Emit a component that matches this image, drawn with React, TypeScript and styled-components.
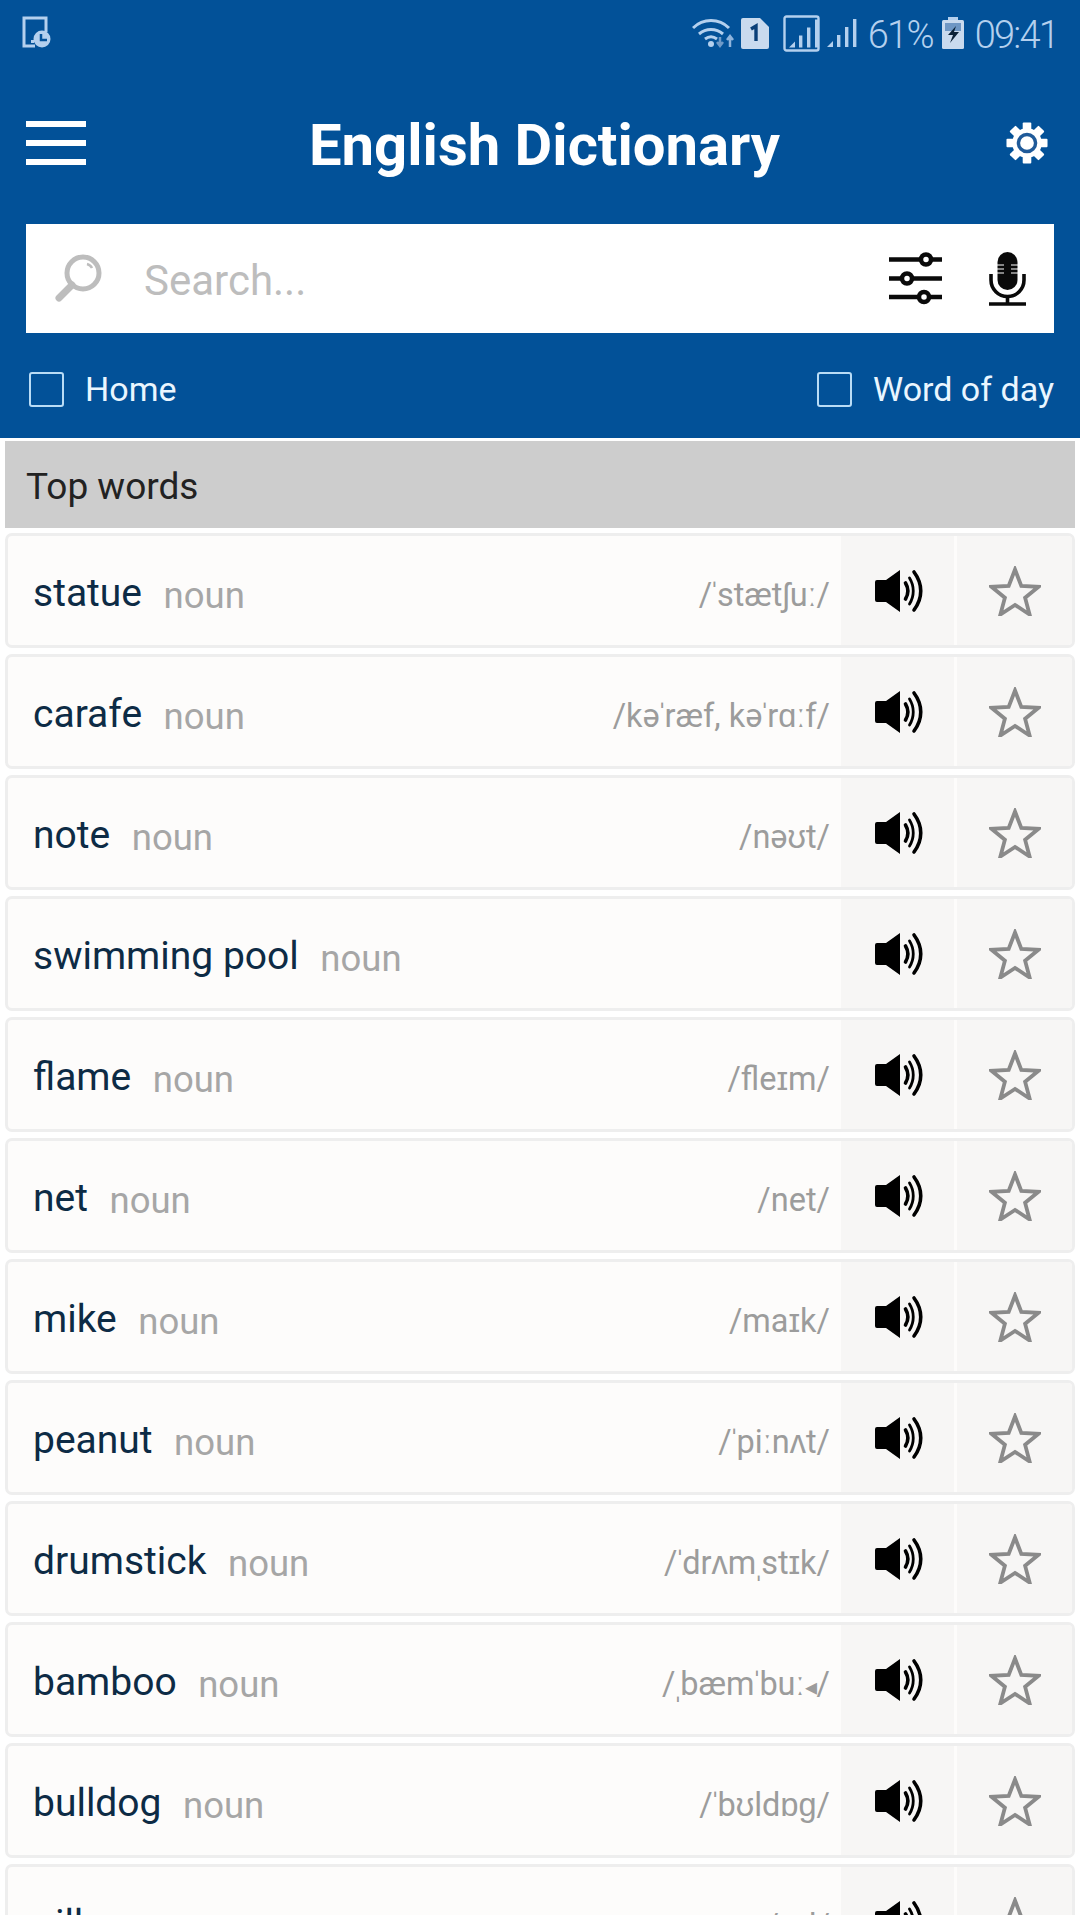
import React from 'react';
import styled, { createGlobalStyle } from 'styled-components';

const WORDS = [
  { word: 'statue', ipa: '/ˈstætʃuː/' },
  { word: 'carafe', ipa: '/kəˈræf, kəˈrɑːf/' },
  { word: 'note', ipa: '/nəʊt/' },
  { word: 'swimming pool', ipa: '' },
  { word: 'flame', ipa: '/fleɪm/' },
  { word: 'net', ipa: '/net/' },
  { word: 'mike', ipa: '/maɪk/' },
  { word: 'peanut', ipa: '/ˈpiːnʌt/' },
  { word: 'drumstick', ipa: '/ˈdrʌmˌstɪk/' },
  { word: 'bamboo', ipa: '/ˌbæmˈbuː◂/' },
  { word: 'bulldog', ipa: '/ˈbʊldɒɡ/' },
  { word: 'pill', ipa: '/pɪl/' },
];

const STATUS = '#b4d0ee';

const GEAR_TEETH = [0, 45, 90, 135, 180, 225, 270, 315];

const FileClockIcon = () => (
  <svg width="30" height="32" viewBox="0 0 30 32">
    <path d="M13 30H2V2h22v14" fill="none" stroke={STATUS} strokeWidth="3" />
    <circle cx="20" cy="23" r="8.500" fill={STATUS} />
    <path d="M19 18v6h6" fill="none" stroke="#03529b" strokeWidth="2.500" />
    <rect x="9" y="24" width="3" height="3" fill={STATUS} />
  </svg>
);

const WifiIcon = () => (
  <svg width="44" height="32" viewBox="0 0 44 32">
    <g fill="none" stroke={STATUS} strokeWidth="3">
      <path d="M1 11C11 1 27 1 37 11" />
      <path d="M7 17c7-6 17-6 24 0" />
      <path d="M13 22c4-3 8-3 12 0" />
    </g>
    <circle cx="19" cy="27" r="3" fill={STATUS} />
    <path d="M28 20v8M25 25l3 4 3-4" fill="none" stroke="#6f9ac8" strokeWidth="2.500" />
    <path d="M38 30v-10M35 23l3-4 3 4" fill="none" stroke="#8fb4dc" strokeWidth="2.500" />
  </svg>
);

const SimIcon = () => (
  <svg width="28" height="31" viewBox="0 0 28 31">
    <path d="M2 0h17l9 9v20a2 2 0 0 1-2 2H2a2 2 0 0 1-2-2V2a2 2 0 0 1 2-2z" fill="#c9daee" />
    <path d="M10 11l5-3v15" fill="none" stroke="#0a3f78" strokeWidth="3.400" />
  </svg>
);

const SignalBars = () => (
  <>
    <path d="M0 29l6-6v6z" />
    <rect x="10" y="17" width="3.400" height="12" />
    <rect x="18" y="9" width="3.400" height="20" />
    <rect x="26" y="1" width="3.400" height="28" />
  </>
);

const BoxedSignalIcon = () => (
  <svg width="37" height="37" viewBox="0 0 37 37">
    <rect x="1.500" y="1.500" width="34" height="34" rx="2" fill="none" stroke={STATUS} strokeWidth="2.400" />
    <g fill={STATUS} transform="translate(6 3.500)">
      <SignalBars />
    </g>
  </svg>
);

const SignalIcon = () => (
  <svg width="31" height="31" viewBox="0 0 31 31">
    <g fill={STATUS}>
      <SignalBars />
    </g>
  </svg>
);

const BatteryIcon = () => (
  <svg width="22" height="32" viewBox="0 0 22 32">
    <rect x="6" y="0" width="10" height="3" fill={STATUS} />
    <rect x="0" y="3" width="22" height="29" rx="1.500" fill="#c9daee" />
    <rect x="3" y="6" width="16" height="8" fill="#6f97c4" />
    <path d="M14 9L6 18h5l-3 8 9-11h-5z" fill="#0b2238" />
  </svg>
);

const GearIcon = () => (
  <svg width="42" height="42" viewBox="0 0 44 44">
    <g fill="#fff">
      {GEAR_TEETH.map((deg) => (
        <rect key={deg} x="17.500" y="0.500" width="9" height="10" rx="1" transform={`rotate(${deg} 22 22)`} />
      ))}
      <circle cx="22" cy="22" r="15.500" />
    </g>
    <circle cx="22" cy="22" r="9" fill="none" stroke="#1f5a99" strokeWidth="3.600" />
  </svg>
);

const SearchIcon = () => (
  <svg width="52" height="52" viewBox="0 0 52 52">
    <circle cx="30" cy="20" r="16" fill="none" stroke="#bdbdbd" strokeWidth="5" />
    <path d="M34 11c2 .5 4 2 5 4" fill="none" stroke="#bdbdbd" strokeWidth="2.500" />
    <path d="M19 32L6 45" stroke="#bdbdbd" strokeWidth="7" strokeLinecap="round" />
  </svg>
);

const SlidersIcon = () => (
  <svg width="54" height="54" viewBox="0 0 54 54">
    <g stroke="#0a0a0a" strokeWidth="4.500">
      <path d="M0 7.500h53M0 26.500h53M0 45h53" />
      <g fill="#fff">
        <circle cx="37" cy="7.500" r="5" />
        <circle cx="18" cy="26.500" r="5" />
        <circle cx="35" cy="45" r="5" />
      </g>
    </g>
  </svg>
);

const MicIcon = () => (
  <svg width="37" height="54" viewBox="0 0 37 54">
    <rect x="8.500" y="0" width="20" height="38" rx="10" fill="#0a0a0a" />
    <path d="M8 13h7M8 17h7M8 21h7M22 13h7M22 17h7M22 21h7" stroke="#fff" strokeWidth="1.200" />
    <path d="M2 22v6a16.500 16.500 0 0 0 33 0v-6" fill="none" stroke="#0a0a0a" strokeWidth="3.600" />
    <path d="M18.500 44v7" stroke="#0a0a0a" strokeWidth="3.600" />
    <path d="M0 52h37" stroke="#0a0a0a" strokeWidth="3.600" />
  </svg>
);

const SpeakerIcon = () => (
  <svg width="48" height="44" viewBox="0 0 48 44">
    <path d="M2 11h9L25 1v42L11 33H2a2 2 0 0 1-2-2V13a2 2 0 0 1 2-2z" fill="#000" />
    <g fill="none" stroke="#000" strokeLinecap="round">
      <path d="M30.500 14c3 5 3 11 0 16" strokeWidth="3.600" />
      <path d="M34.500 9c5 8 5 18 0 26" strokeWidth="2.800" />
      <path d="M39 3c9 12 9 26 0 38" strokeWidth="3.600" />
    </g>
  </svg>
);

const StarIcon = () => (
  <svg width="52" height="50" viewBox="0 0 52 50">
    <path
      d="M26 3.500l6.300 16.500 17.200.8-13.400 11 4.500 16.700L26 38.900l-14.600 9.600 4.500-16.700L2.500 20.800l17.200-.8z"
      fill="none"
      stroke="#8a8a8a"
      strokeWidth="3.800"
    />
  </svg>
);

// stress marks and the arrow are wide in the fallback glyphs, the app draws them tight
const renderIpa = (ipa: string) =>
  ipa.split(/([ˈˌ◂])/).map((part, i) => {
    if (i % 2 === 0) return part;
    return part === '◂' ? <Arrow key={i}>{part}</Arrow> : <Stress key={i}>{part}</Stress>;
  });

const App = () => {
  return (
    <>
      <GlobalStyle />
      <Page>
        <Header>
          <StatusBar>
            <FileClockIcon />
            <StatusRight>
              <IconSlot $right={5}>
                <WifiIcon />
              </IconSlot>
              <IconSlot $right={14}>
                <SimIcon />
              </IconSlot>
              <IconSlot $right={7}>
                <BoxedSignalIcon />
              </IconSlot>
              <IconSlot $right={10}>
                <SignalIcon />
              </IconSlot>
              <StatusText>61%</StatusText>
              <IconSlot $left={9} $right={11}>
                <BatteryIcon />
              </IconSlot>
              <StatusText>09:41</StatusText>
            </StatusRight>
          </StatusBar>
          <Toolbar>
            <Burger>
              <span />
              <span />
              <span />
            </Burger>
            <Title>English Dictionary</Title>
            <IconSlot $bottom={5}>
              <GearIcon />
            </IconSlot>
          </Toolbar>
          <SearchBar>
            <SearchIcon />
            <Placeholder>Search...</Placeholder>
            <SlidersIcon />
            <IconSlot $left={46}>
              <MicIcon />
            </IconSlot>
          </SearchBar>
          <Tabs>
            <Tab>
              <Check />
              Home
            </Tab>
            <Tab>
              <Check />
              Word of day
            </Tab>
          </Tabs>
        </Header>
        <SectionTitle>Top words</SectionTitle>
        <List>
          {WORDS.map((item) => (
            <Row key={item.word}>
              <RowText>
                <Word>{item.word}</Word>
                <Kind>noun</Kind>
                <Ipa>{renderIpa(item.ipa)}</Ipa>
              </RowText>
              <ActionCell $width={113} $nudge={2}>
                <SpeakerIcon />
              </ActionCell>
              <ActionCell $width={115}>
                <StarIcon />
              </ActionCell>
            </Row>
          ))}
        </List>
      </Page>
    </>
  );
};

const GlobalStyle = createGlobalStyle`
  html, body {
    margin: 0;
    padding: 0;
    background: #fff;
  }

  * {
    box-sizing: border-box;
  }
`;

const Page = styled.div`
  width: 1080px;
  height: 1915px;
  overflow: hidden;
  background: #fff;
  font-family: Roboto, 'Liberation Sans', sans-serif;
`;

const Header = styled.header`
  height: 438px;
  background: #025198;
  padding: 0 26px;
`;

const StatusBar = styled.div`
  height: 66px;
  margin-left: -4px;
  margin-right: -4px;
  padding-top: 16px;
  display: flex;
  align-items: flex-start;
  justify-content: space-between;
`;

const StatusRight = styled.div`
  display: flex;
  align-items: center;
  height: 34px;
`;

const IconSlot = styled.span<{ $left?: number; $right?: number; $bottom?: number }>`
  display: flex;
  margin-left: ${({ $left }) => $left ?? 0}px;
  margin-right: ${({ $right }) => $right ?? 0}px;
  margin-bottom: ${({ $bottom }) => $bottom ?? 0}px;
`;

const StatusText = styled.span`
  font-size: 38px;
  font-weight: 300;
  color: ${STATUS};
  letter-spacing: -1.8px;
  position: relative;
  top: 2px;
`;

const Toolbar = styled.div`
  height: 158px;
  display: flex;
  align-items: center;
  justify-content: space-between;
  padding-right: 6px;
`;

const Burger = styled.div`
  width: 60px;
  display: flex;
  flex-direction: column;
  gap: 13px;
  margin: 0 -1px 4px 0;

  span {
    display: block;
    height: 6px;
    background: #fff;
  }
`;

const Title = styled.h1`
  margin: 0 2px 0 0;
  font-size: 58px;
  font-weight: 700;
  color: #fff;
`;

const SearchBar = styled.div`
  height: 109px;
  background: #fff;
  display: flex;
  align-items: center;
  padding: 0 28px 0 27px;
`;

const Placeholder = styled.span`
  flex: 1;
  margin-left: 39px;
  padding-top: 4px;
  font-size: 42px;
  color: #bdbdbd;
`;

const Tabs = styled.div`
  height: 105px;
  display: flex;
  align-items: center;
  justify-content: space-between;
  padding: 7px 0 0 3px;
`;

const Tab = styled.div`
  display: flex;
  align-items: center;
  gap: 21px;
  font-size: 34px;
  color: #eaf6ff;
`;

const Check = styled.span`
  width: 35px;
  height: 35px;
  border: 2px solid #b9dcf6;
  border-radius: 3px;
`;

const SectionTitle = styled.div`
  height: 87px;
  margin: 3px 5px 5px;
  padding: 3px 0 0 21px;
  display: flex;
  align-items: center;
  background: #cdcdcd;
  font-size: 37px;
  color: #222;
`;

const List = styled.div`
  display: flex;
  flex-direction: column;
  gap: 6px;
  padding: 0 5px;
`;

const Row = styled.div`
  height: 115px;
  flex-shrink: 0;
  display: flex;
  border: 3px solid #eeeeee;
  border-radius: 7px;
  background: #fdfcfb;
  overflow: hidden;
`;

const RowText = styled.div`
  flex: 1;
  display: flex;
  align-items: baseline;
  padding: 34px 11px 0 25px;
`;

const Word = styled.span`
  font-size: 39px;
  color: #0d2b45;
`;

const Kind = styled.span`
  margin-left: 21.5px;
  font-size: 36.5px;
  color: #a6a6a6;
  position: relative;
  top: 2px;
`;

const Ipa = styled.span`
  margin-left: auto;
  font-size: 32.5px;
  color: #9c9c9c;
`;

const Stress = styled.span`
  letter-spacing: -3px;
  margin-left: -3px;
`;

const Arrow = styled.span`
  font-size: 24px;
`;

const ActionCell = styled.div<{ $width: number; $nudge?: number }>`
  width: ${({ $width }) => $width}px;
  display: flex;
  align-items: center;
  justify-content: center;
  padding-left: ${({ $nudge }) => $nudge ?? 0}px;
  background: #f7f6f5;

  & + & {
    margin-left: 3px;
  }
`;

export default App;
